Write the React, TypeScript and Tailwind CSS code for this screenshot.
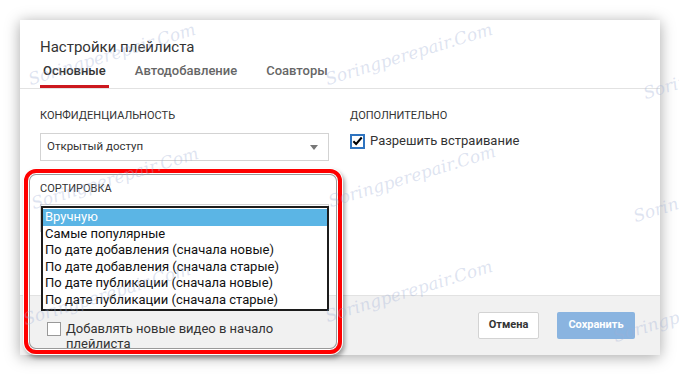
import type { ReactNode } from 'react';

const SORT_OPTIONS = [
    'Вручную',
    'Самые популярные',
    'По дате добавления (сначала новые)',
    'По дате добавления (сначала старые)',
    'По дате публикации (сначала новые)',
    'По дате публикации (сначала старые)',
];

const WATERMARKS = [
    { left: 25, top: 46 },
    { left: 322, top: 46 },
    { left: 640, top: 60 },
    { left: 28, top: 170 },
    { left: 325, top: 168 },
    { left: 630, top: 183 },
    { left: 20, top: 286 },
    { left: 322, top: 283 },
    { left: 610, top: 303 },
];

function Tab({ children, active }: { children: ReactNode; active?: boolean }) {
    return (
        <div
            className={
                active
                    ? 'h-[28px] border-b-[3px] border-[#cc181e] px-[3px] pt-[2px] text-[13px] font-medium leading-[18px] text-[#333]'
                    : 'h-[28px] border-b-[3px] border-transparent px-[3px] pt-[2px] text-[13px] font-medium leading-[18px] text-[#666]'
            }
        >
            {children}
        </div>
    );
}

function SectionLabel({ children }: { children: ReactNode }) {
    return <div className="text-[11px] leading-[14px] text-[#333]">{children}</div>;
}

function FakeSelect({ value }: { value?: string }) {
    return (
        <div className="flex h-[28px] items-center justify-between border border-[#d3d3d3] bg-white pl-[6px] pr-[10px]">
            <span className="text-[11.5px] text-[#333]">{value}</span>
            <span className="h-0 w-0 border-x-[4px] border-t-[5px] border-x-transparent border-t-[#777]" />
        </div>
    );
}

export default function App() {
    return (
        <div className="relative h-[375px] w-[679px] overflow-hidden bg-white font-[Roboto,Arial,sans-serif]">
            <div className="pl-[20px] pt-[20px]">
                <div className="relative flex h-[335px] w-[640px] flex-col bg-white shadow-[0_2px_14px_rgba(0,0,0,0.35)]">
                    {/* header */}
                    <div className="border-b border-[#e2e2e2] px-[20px] pt-[17px]">
                        <h1 className="text-[15px] leading-[20px] text-[#333]">Настройки плейлиста</h1>
                        <div className="mt-[3px] flex gap-[23px]">
                            <Tab active>Основные</Tab>
                            <Tab>Автодобавление</Tab>
                            <Tab>Соавторы</Tab>
                        </div>
                    </div>

                    {/* body */}
                    <div className="flex h-[206px] gap-[21px] px-[20px] pt-[20px]">
                        <div className="w-[289px]">
                            <SectionLabel>КОНФИДЕНЦИАЛЬНОСТЬ</SectionLabel>
                            <div className="mt-[10px]">
                                <FakeSelect value="Открытый доступ" />
                            </div>
                            <div className="mt-[21px]">
                                <SectionLabel>СОРТИРОВКА</SectionLabel>
                            </div>
                            <div className="mt-[8px]">
                                <FakeSelect />
                            </div>
                        </div>
                        <div>
                            <SectionLabel>ДОПОЛНИТЕЛЬНО</SectionLabel>
                            <label className="mt-[10px] flex h-[16px] items-center gap-[5px]">
                                <span className="flex h-[15px] w-[15px] items-center justify-center border-2 border-[#2f74c0] bg-white">
                                    <svg width="12" height="12" viewBox="0 0 12 12">
                                        <path d="M1.5 6.2 L4.5 9.3 L10.6 2.2" fill="none" stroke="#000" strokeWidth="2.2" />
                                    </svg>
                                </span>
                                <span className="text-[13px] text-[#333]">Разрешить встраивание</span>
                            </label>
                        </div>
                    </div>

                    {/* footer */}
                    <div className="flex flex-1 items-start justify-between border-t border-[#e2e2e2] bg-[#f1f1f1] pr-[25px]">
                        <label className="ml-[27px] mt-[25px] flex items-start gap-[5px]">
                            <span className="mt-[1px] h-[14px] w-[14px] border border-[#999] bg-white" />
                            <span className="w-[215px] text-[13px] leading-[15px] text-[#333]">
                                Добавлять новые видео в начало плейлиста
                            </span>
                        </label>
                        <div className="mt-[16px] flex gap-[18px]">
                            <button
                                type="button"
                                className="h-[27px] w-[61px] rounded-[2px] border border-[#d3d3d3] bg-white text-[11px] font-bold text-[#333]"
                            >
                                Отмена
                            </button>
                            <button
                                type="button"
                                className="h-[27px] w-[78px] rounded-[2px] bg-[#8ab4e0] text-[11px] font-bold text-white"
                            >
                                Сохранить
                            </button>
                        </div>
                    </div>

                    {/* opened sort list */}
                    <div className="absolute left-[21px] top-[186px] w-[288px] border-2 border-[#1c1c1c] bg-white py-[1px]">
                        {SORT_OPTIONS.map((option, i) => (
                            <div
                                key={option}
                                className={
                                    i === 0
                                        ? 'h-[16.5px] bg-[#5bb5e5] pl-[2px] text-[13px] leading-[16px] text-white'
                                        : 'h-[16.5px] pl-[2px] text-[13px] leading-[16px] text-[#111]'
                                }
                            >
                                {option}
                            </div>
                        ))}
                    </div>

                    {/* red highlight */}
                    <div className="pointer-events-none absolute left-[4px] top-[149px] h-[185px] w-[318px] rounded-[12px] border-[4px] border-[#ff0000] shadow-[0_0_0_1px_#fff,2px_3px_4px_1px_rgba(0,0,0,0.35),inset_0_0_0_1px_#fff,inset_0_0_0_2px_#9a9a9a]" />
                </div>
            </div>

            {WATERMARKS.map((w) => (
                <span
                    key={`${w.left}-${w.top}`}
                    className="pointer-events-none absolute -rotate-[17deg] font-['DejaVu_Serif',serif] text-[17px] italic leading-none text-[#9fb0d6]/35"
                    style={{ left: w.left, top: w.top }}
                >
                    Soringperepair.Com
                </span>
            ))}
        </div>
    );
}
